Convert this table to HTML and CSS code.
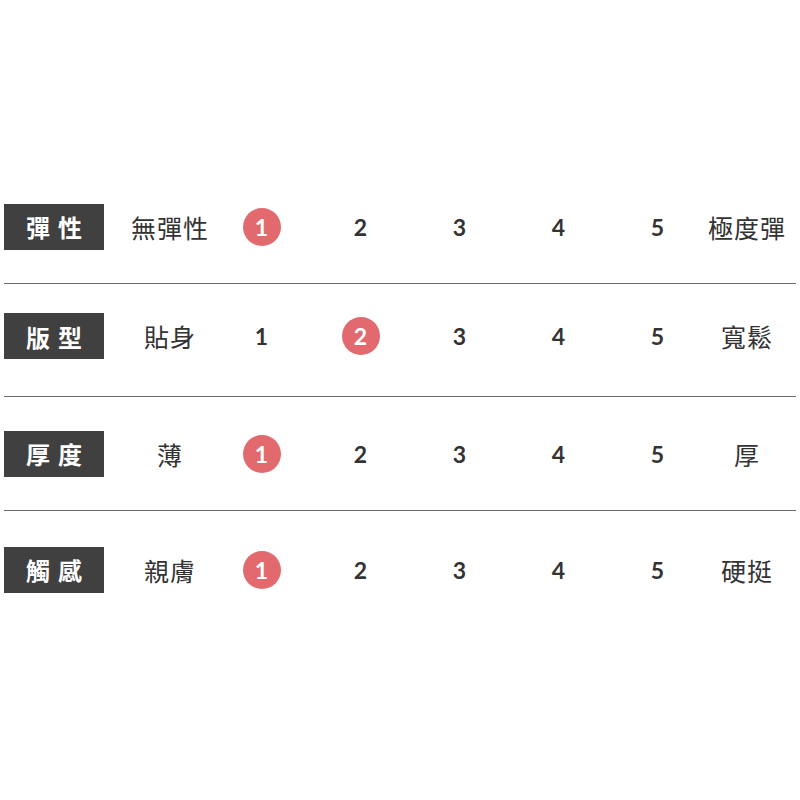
FILE: index.html
```html
<!DOCTYPE html>
<html lang="zh-Hant">
<head>
<meta charset="utf-8">
<link rel="stylesheet" href="styles.css">
</head>
<body>
<div class="table">
  <div class="row">
    <div class="label">彈性</div>
    <div class="low">無彈性</div>
    <div class="num"><span class="dot">1</span></div>
    <div class="num">2</div>
    <div class="num">3</div>
    <div class="num">4</div>
    <div class="num">5</div>
    <div class="high">極度彈</div>
  </div>
  <div class="row second">
    <div class="label">版型</div>
    <div class="low">貼身</div>
    <div class="num">1</div>
    <div class="num"><span class="dot">2</span></div>
    <div class="num">3</div>
    <div class="num">4</div>
    <div class="num">5</div>
    <div class="high">寬鬆</div>
  </div>
  <div class="row">
    <div class="label">厚度</div>
    <div class="low">薄</div>
    <div class="num"><span class="dot">1</span></div>
    <div class="num">2</div>
    <div class="num">3</div>
    <div class="num">4</div>
    <div class="num">5</div>
    <div class="high">厚</div>
  </div>
  <div class="row last">
    <div class="label">觸感</div>
    <div class="low">親膚</div>
    <div class="num"><span class="dot">1</span></div>
    <div class="num">2</div>
    <div class="num">3</div>
    <div class="num">4</div>
    <div class="num">5</div>
    <div class="high">硬挺</div>
  </div>
</div>
</body>
</html>
```
FILE: styles.css
```css
html, body {
  margin: 0;
  padding: 0;
  background: #ffffff;
}
body {
  font-family: "Noto Sans CJK TC", "Noto Sans", sans-serif;
  color: #333333;
}
.table {
  padding-top: 170px;
  margin-left: 4px;
  width: 792px;
}
.row {
  display: grid;
  grid-template-columns: 100px 108px repeat(5, 99px) 80px;
  align-items: center;
  height: 113px;
  border-bottom: 1px solid #6a6a6a;
}
.row.second {
  padding-bottom: 8px;
  box-sizing: border-box;
}
.row.last {
  padding-top: 4px;
  box-sizing: border-box;
  border-bottom: none;
}
.label {
  height: 46px;
  background: #404040;
  color: #ffffff;
  font-size: 24px;
  font-weight: 700;
  letter-spacing: 8px;
  padding-left: 8px;
  display: flex;
  align-items: center;
  justify-content: center;
  box-sizing: border-box;
}
.low, .high {
  font-size: 25px;
  letter-spacing: 1px;
  text-align: center;
  white-space: nowrap;
}
.low {
  padding-left: 24px;
}
.num {
  display: flex;
  justify-content: center;
  align-items: center;
  font-family: "Lato", "Roboto", sans-serif;
  font-weight: 700;
  font-size: 23px;
  color: #333333;
}
.dot {
  width: 38px;
  height: 38px;
  border-radius: 50%;
  background: #e26a6e;
  color: #ffffff;
  display: flex;
  align-items: center;
  justify-content: center;
}
```
